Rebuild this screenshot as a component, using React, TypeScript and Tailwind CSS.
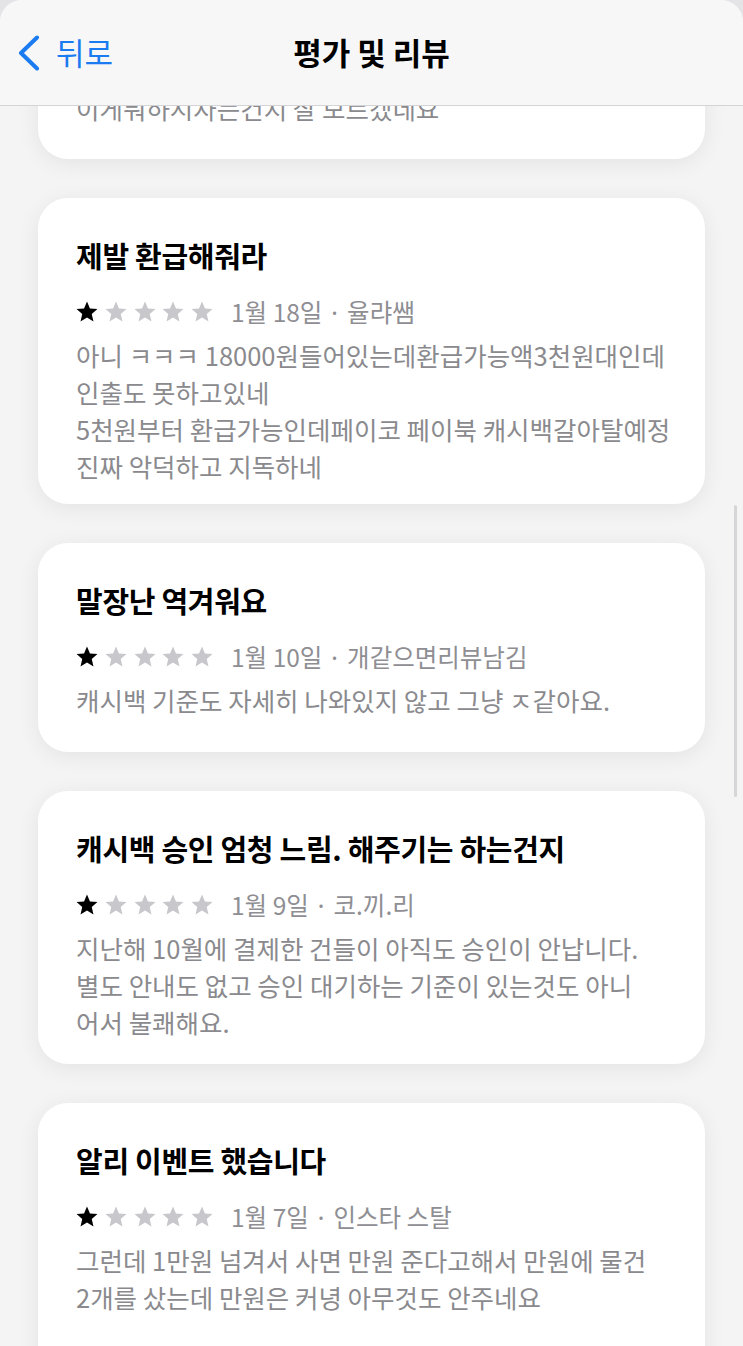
import { Fragment } from 'react';

type Review = {
  title?: string;
  date?: string;
  author?: string;
  lines: string[];
  box: string;
};

const REVIEWS: Review[] = [
  { lines: ['이게뭐하시자는건지 잘 모르겠네요'], box: 'h-[200px] -mt-[147px] justify-end pb-[33px]' },
  {
    title: '제발 환급해줘라',
    date: '1월 18일',
    author: '율랴쌤',
    lines: [
      '아니 ㅋㅋㅋ 18000원들어있는데환급가능액3천원대인데',
      '인출도 못하고있네',
      '5천원부터 환급가능인데페이코 페이북 캐시백갈아탈예정',
      '진짜 악덕하고 지독하네',
    ],
    box: 'h-[306px] pt-[39px]',
  },
  {
    title: '말장난 역겨워요',
    date: '1월 10일',
    author: '개같으면리뷰남김',
    lines: ['캐시백 기준도 자세히 나와있지 않고 그냥 ㅈ같아요.'],
    box: 'h-[209px] pt-[39px]',
  },
  {
    title: '캐시백 승인 엄청 느림. 해주기는 하는건지',
    date: '1월 9일',
    author: '코.끼.리',
    lines: [
      '지난해 10월에 결제한 건들이 아직도 승인이 안납니다.',
      '별도 안내도 없고 승인 대기하는 기준이 있는것도 아니',
      '어서 불쾌해요.',
    ],
    box: 'h-[273px] pt-[39px]',
  },
  {
    title: '알리 이벤트 했습니다',
    date: '1월 7일',
    author: '인스타 스탈',
    lines: [
      '그런데 1만원 넘겨서 사면 만원 준다고해서 만원에 물건',
      '2개를 샀는데 만원은 커녕 아무것도 안주네요',
    ],
    box: 'h-[300px] pt-[39px]',
  },
];

const STAR = 'M12 1.5L14.94 8.45L22.46 9.1L16.76 14.05L18.47 21.4L12 17.5L5.53 21.4L7.24 14.05L1.54 9.1L9.06 8.45Z';

function Stars({ rating }: { rating: number }) {
  return (
    <div className="flex items-center gap-[4.75px] -ml-[1px]">
      {[0, 1, 2, 3, 4].map((i) => (
        <svg key={i} width="24" height="24" viewBox="0 0 24 24">
          <path d={STAR} fill={i < rating ? '#000000' : '#c7c7cc'} />
        </svg>
      ))}
    </div>
  );
}

export default function App() {
  return (
    <div className="w-[743px] h-[1346px] bg-[#e4e4e6]" style={{ fontFamily: '"Noto Sans CJK KR", "Noto Sans", sans-serif' }}>
      <div className="relative w-full h-full flex flex-col rounded-t-[22px] overflow-hidden bg-[#f4f4f5]">
        <header className="relative h-[106px] shrink-0 bg-[#f7f7f8] border-b border-[#d4d4d6] flex items-center">
          <div className="flex items-center pl-[18px] gap-[16px] text-[#1b7bf0]">
            <svg width="22" height="36" viewBox="0 0 22 36" fill="none">
              <path d="M19 2.5L3 18l16 15.5" stroke="#1b7bf0" strokeWidth="4" strokeLinecap="round" strokeLinejoin="round" />
            </svg>
            <span className="text-[31px] leading-none -mt-[2px]">뒤로</span>
          </div>
          <h1 className="absolute left-0 right-0 text-center text-[31px] font-bold text-black leading-none -mt-[2px] pointer-events-none">
            평가 및 리뷰
          </h1>
        </header>

        <main className="flex-1 overflow-hidden px-[38px] flex flex-col gap-[39px]">
          {REVIEWS.map((r, idx) => (
            <section
              key={idx}
              className={`shrink-0 flex flex-col bg-white rounded-[30px] px-[38px] shadow-[0_4px_22px_rgba(0,0,0,0.07)] ${r.box}`}
            >
              {r.title && (
                <Fragment>
                  <h2 className="text-[29px] font-bold leading-[36px] text-black tracking-[-0.3px]">{r.title}</h2>
                  <div className="flex items-center mt-[21px] h-[36px]">
                    <Stars rating={1} />
                    <span className="ml-[17px] text-[24.5px] text-[#8e8e93] leading-[36px]">
                      {r.date} · {r.author}
                    </span>
                  </div>
                </Fragment>
              )}
              <div className={`text-[25.5px] leading-[37px] text-[#8a8a8e] ${r.title ? 'mt-[6px]' : ''}`}>
                {r.lines.map((l, i) => (
                  <p key={i} className="whitespace-nowrap">{l}</p>
                ))}
              </div>
            </section>
          ))}
        </main>

        <div className="absolute right-[6px] top-[505px] w-[3px] h-[292px] rounded-full bg-[#d6d6d8]" />
      </div>
    </div>
  );
}
